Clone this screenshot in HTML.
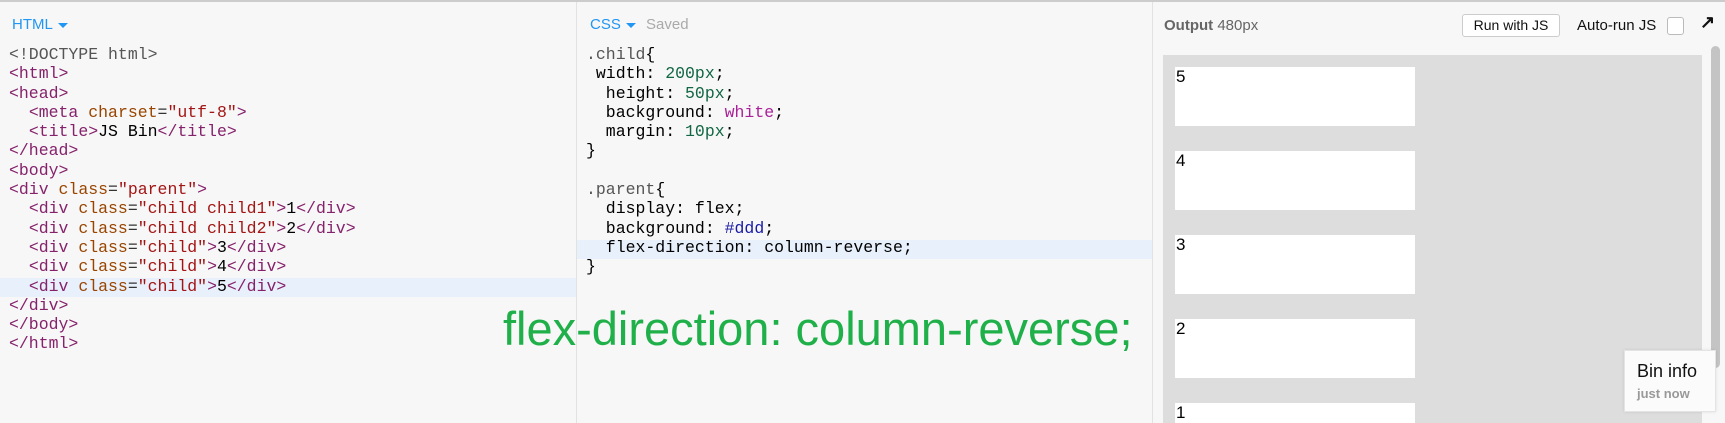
<!DOCTYPE html>
<html><head><meta charset="utf-8"><style>
html,body{margin:0;width:1725px;height:423px;overflow:hidden}
body{background:#f7f7f7;font-family:"Liberation Sans",sans-serif;position:relative}
.top{position:absolute;left:0;top:0;width:1725px;height:2px;background:#ccc}
.div{position:absolute;top:2px;width:1px;height:421px;background:#e2e2e2}
.hdr{position:absolute;top:16px;font-size:15px;color:#2196f3}
.hdr .c{display:inline-block;border-left:5px solid transparent;border-right:5px solid transparent;border-top:5px solid #2196f3;vertical-align:middle;margin-left:5px}
.code{position:absolute;top:45px;font-family:"Liberation Mono",monospace;font-size:16.5px;line-height:19.3px;white-space:pre;color:#333}
.hl{position:absolute;height:19px;background:#e8f0fc}
.t{color:#85226b}.a{color:#994500}.s{color:#a31515}.k{color:#000}
.n{color:#116644}.w{color:#aa2299}.h{color:#1a1aa6}.sel{color:#555}
.out{position:absolute;left:1163px;top:55px;width:539px;height:368px;background:#dddddd}
.box{position:absolute;left:1175px;width:240px;height:59px;background:#fff;font-size:17px;color:#000}
.box span{position:absolute;left:1px;top:0}
</style></head><body>
<div class="top"></div>
<div class="hl" style="left:0;top:278px;width:576px"></div>
<div class="hl" style="left:577px;top:240px;width:575px"></div>
<div class="div" style="left:576px"></div>
<div class="div" style="left:1152px"></div>
<div class="hdr" style="left:12px">HTML<span class="c"></span></div>
<div class="hdr" style="left:590px">CSS<span class="c"></span> <span style="color:#aaa;margin-left:6px">Saved</span></div>
<div class="code" style="left:9px"><span style="color:#555">&lt;!DOCTYPE html&gt;</span>
<span class="t">&lt;html&gt;</span>
<span class="t">&lt;head&gt;</span>
  <span class="t">&lt;meta</span> <span class="a">charset</span>=<span class="s">"utf-8"</span><span class="t">&gt;</span>
  <span class="t">&lt;title&gt;</span><span class="k">JS Bin</span><span class="t">&lt;/title&gt;</span>
<span class="t">&lt;/head&gt;</span>
<span class="t">&lt;body&gt;</span>
<span class="t">&lt;div</span> <span class="a">class</span>=<span class="s">"parent"</span><span class="t">&gt;</span>
  <span class="t">&lt;div</span> <span class="a">class</span>=<span class="s">"child child1"</span><span class="t">&gt;</span><span class="k">1</span><span class="t">&lt;/div&gt;</span>
  <span class="t">&lt;div</span> <span class="a">class</span>=<span class="s">"child child2"</span><span class="t">&gt;</span><span class="k">2</span><span class="t">&lt;/div&gt;</span>
  <span class="t">&lt;div</span> <span class="a">class</span>=<span class="s">"child"</span><span class="t">&gt;</span><span class="k">3</span><span class="t">&lt;/div&gt;</span>
  <span class="t">&lt;div</span> <span class="a">class</span>=<span class="s">"child"</span><span class="t">&gt;</span><span class="k">4</span><span class="t">&lt;/div&gt;</span>
  <span class="t">&lt;div</span> <span class="a">class</span>=<span class="s">"child"</span><span class="t">&gt;</span><span class="k">5</span><span class="t">&lt;/div&gt;</span>
<span class="t">&lt;/div&gt;</span>
<span class="t">&lt;/body&gt;</span>
<span class="t">&lt;/html&gt;</span></div>
<div class="code" style="left:586px;color:#000"><span class="sel">.child</span>{
 width: <span class="n">200px</span>;
  height: <span class="n">50px</span>;
  background: <span class="w">white</span>;
  margin: <span class="n">10px</span>;
}

<span class="sel">.parent</span>{
  display: flex;
  background: <span class="h">#ddd</span>;
  flex-direction: column-reverse;
}</div>
<div style="position:absolute;left:503px;top:302px;font-size:47px;line-height:54px;color:#1fb04a;white-space:nowrap">flex-direction: column-reverse;</div>
<div style="position:absolute;left:1164px;top:17px;font-size:15px;color:#666;font-weight:bold">Output <span style="font-weight:normal">480px</span></div>
<div style="position:absolute;left:1462px;top:14px;width:96px;height:21px;border:1px solid #ccc;border-radius:3px;background:#fff;font-size:14px;text-align:center;line-height:21px;color:#111">Run with JS</div>
<div style="position:absolute;left:1577px;top:17px;font-size:15px;color:#111">Auto-run JS</div>
<div style="position:absolute;left:1667px;top:17px;width:15px;height:16px;border:1px solid #bbb;border-radius:3px;background:#fff"></div>
<div style="position:absolute;left:1700px;top:12px;font-size:18px;color:#111;font-weight:bold">&#8599;</div>
<div class="out"></div>
<div class="box" style="top:67px"><span>5</span></div>
<div class="box" style="top:151px"><span>4</span></div>
<div class="box" style="top:235px"><span>3</span></div>
<div class="box" style="top:319px"><span>2</span></div>
<div class="box" style="top:403px;height:20px"><span>1</span></div>
<div style="position:absolute;left:1711px;top:46px;width:9px;height:322px;background:#c4c4c4;border-radius:5px"></div>
<div style="position:absolute;left:1624px;top:350px;width:90px;height:60px;background:#fbfbfb;border:1px solid #e4e4e4;box-shadow:0 0 3px rgba(0,0,0,.1)">
<div style="position:absolute;left:12px;top:10px;font-size:18px;color:#111">Bin info</div>
<div style="position:absolute;left:12px;top:35px;font-size:13px;color:#999;font-weight:bold">just now</div></div>
</body></html>
